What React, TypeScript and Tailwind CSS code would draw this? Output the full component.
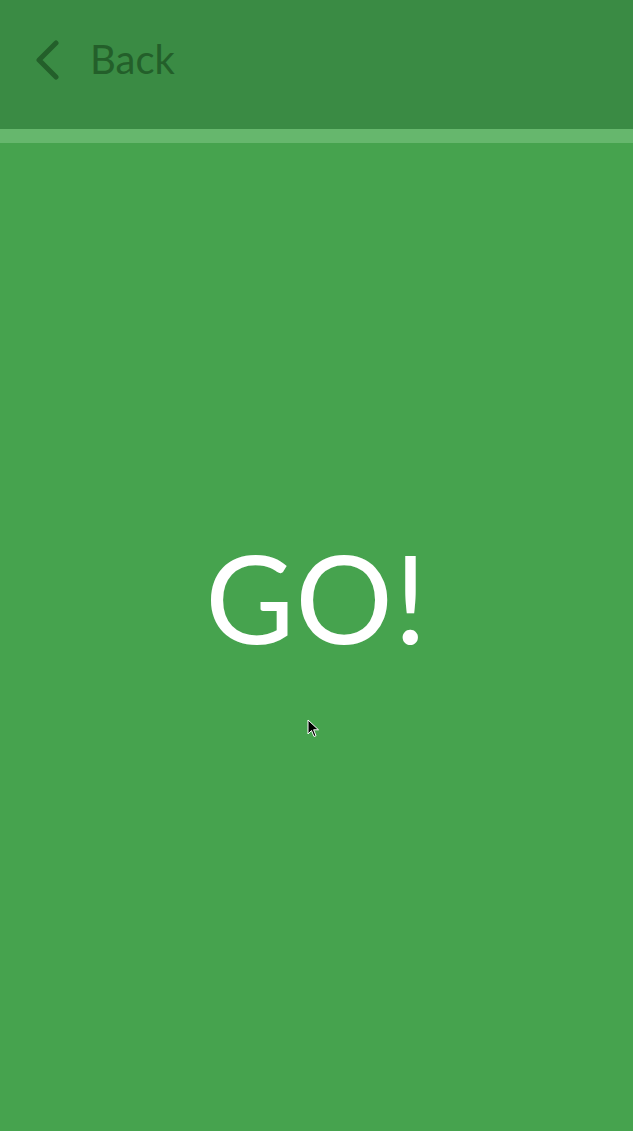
import React from "react";

export default function App() {
  return (
    <div
      className="w-[633px] h-[1131px] flex flex-col bg-[#46a34e] relative overflow-hidden"
      style={{ fontFamily: "Lato, 'Open Sans', sans-serif" }}
    >
      <div className="h-[129px] bg-[#3a8b44] flex items-center pl-[34px] pb-[10px] shrink-0">
        <svg width="26" height="40" viewBox="0 0 26 40" className="mr-[30px]">
          <path d="M22 3 L5 20 L22 37" fill="none" stroke="#235f2a" strokeWidth="5" strokeLinecap="round" strokeLinejoin="round" />
        </svg>
        <span className="text-[40px] leading-none text-[#235f2a] -mt-[1px]">Back</span>
      </div>
      <div className="h-[14px] bg-[#66b76d] shrink-0" />
      <div className="flex-1 flex items-center justify-center pb-[80px]">
        <span className="text-[122px] leading-none text-white tracking-[1px]">GO!</span>
      </div>
      <svg className="absolute left-[307px] top-[719px]" width="14" height="20" viewBox="0 0 14 20">
        <path d="M1 1 L1 15 L4.5 11.5 L7 17.5 L9 16.7 L6.6 10.8 L11.5 10.8 Z" fill="#000" stroke="#fff" strokeWidth="1" />
      </svg>
    </div>
  );
}
